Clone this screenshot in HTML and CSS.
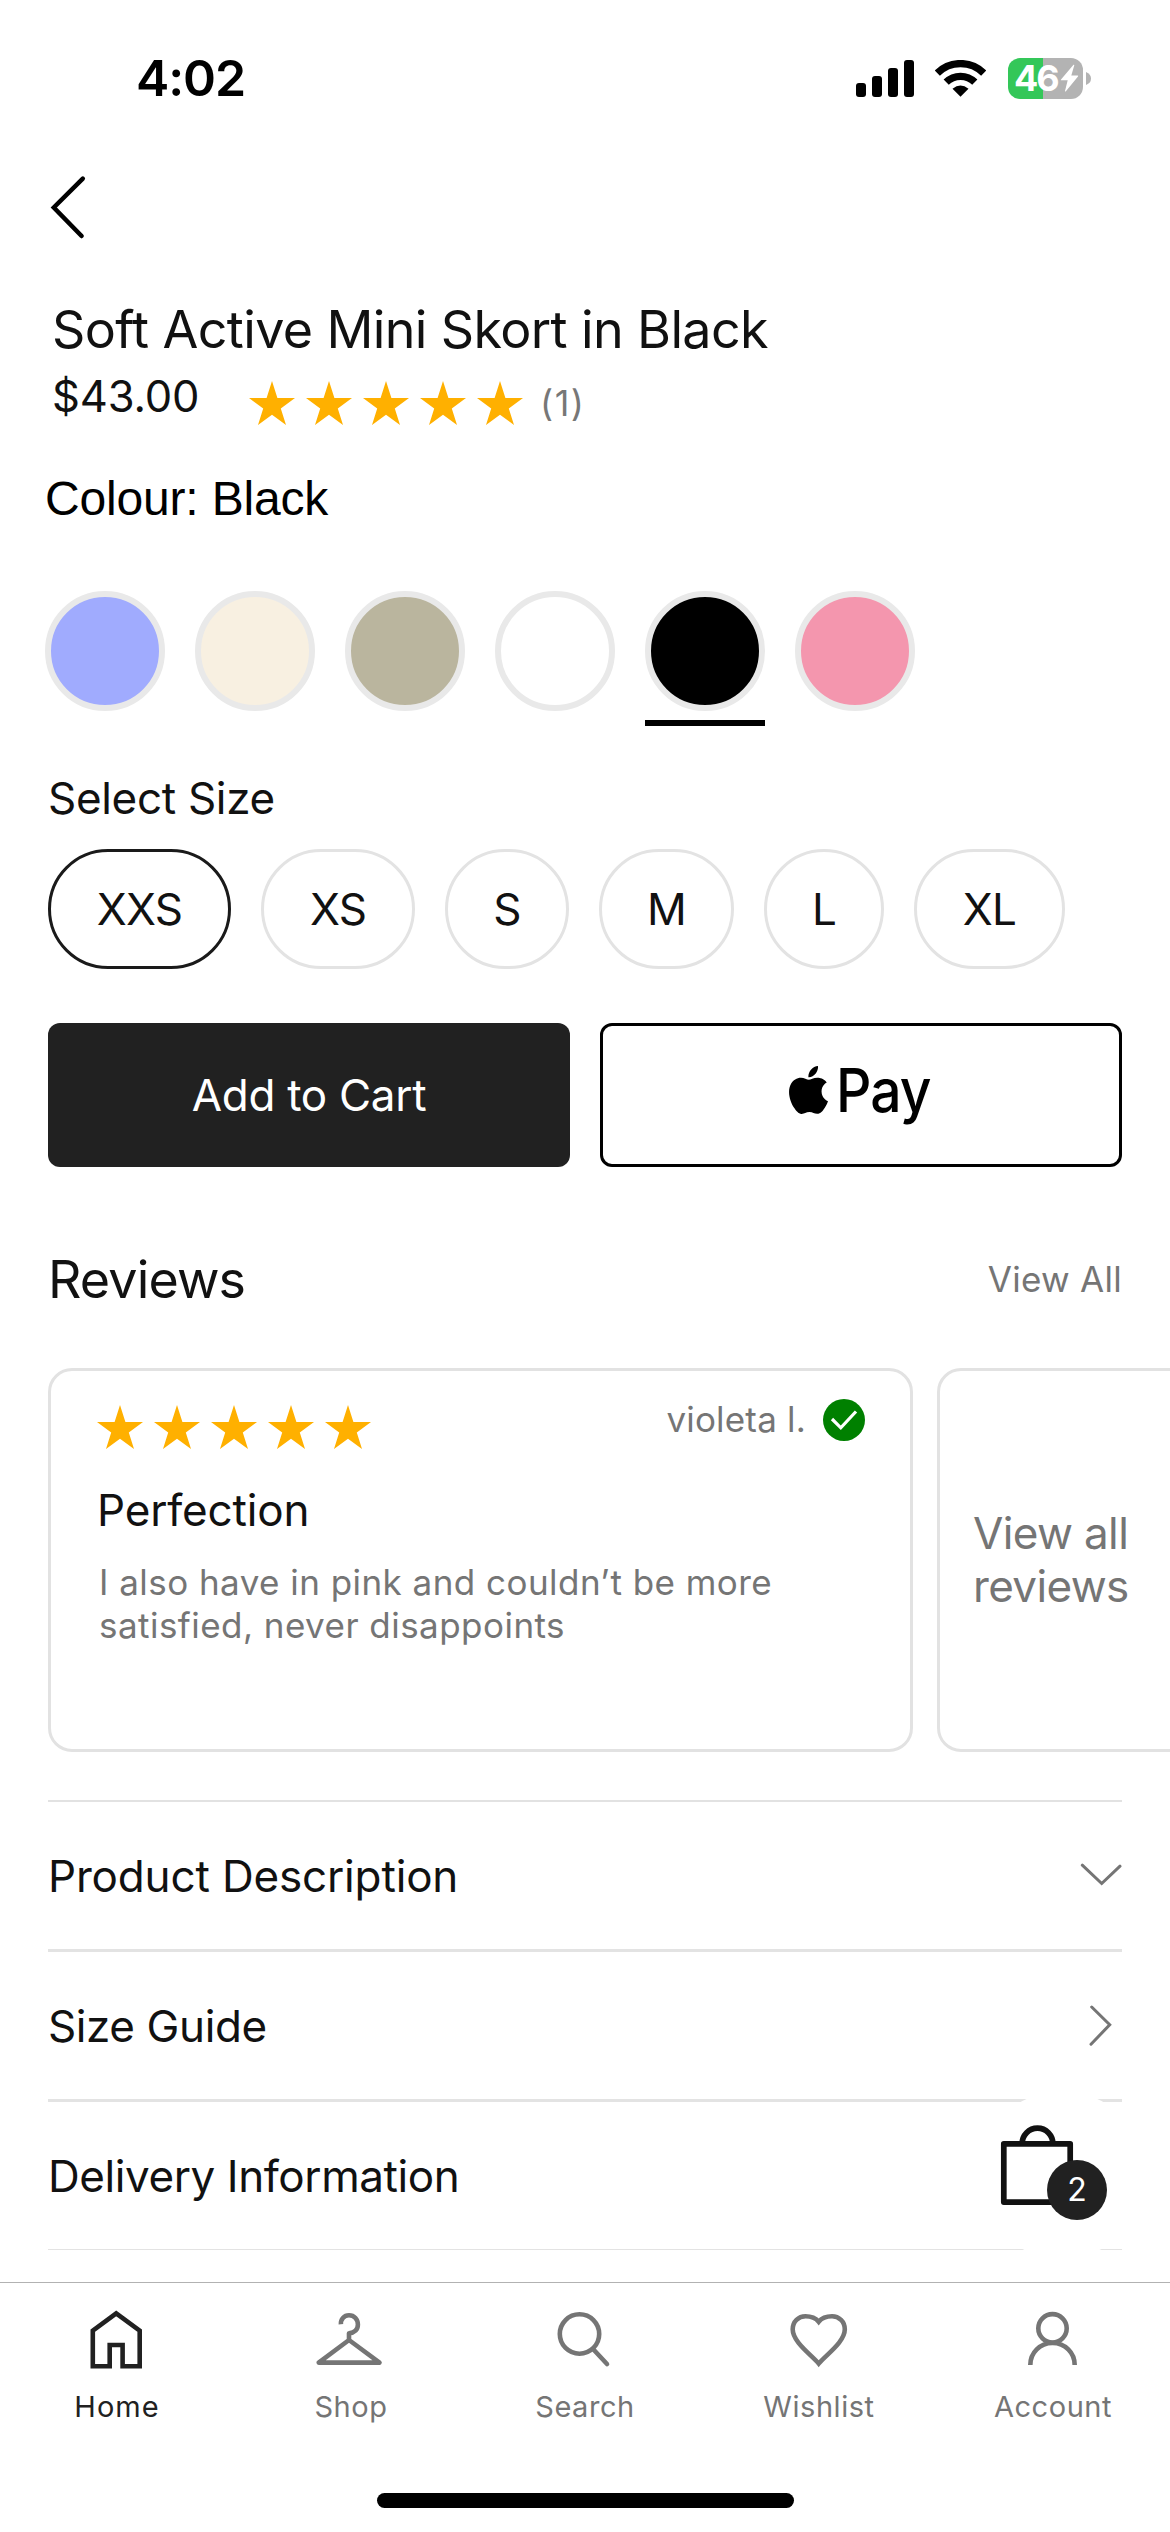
FILE: index.html
```html
<!DOCTYPE html>
<html lang="en">
<head>
<meta charset="utf-8">
<title>Soft Active Mini Skort in Black</title>
<link rel="stylesheet" href="styles.css">
</head>
<body>
<svg width="0" height="0" class="defs" aria-hidden="true">
  <symbol id="star" viewBox="0 0 46 44"><path d="M23 0l5.4 17H46L31.8 27.4 37 44 23 33.7 9 44l5.2-16.6L0 17h17.6z"/></symbol>
</svg>

<div class="screen">
  <header class="status">
    <span class="status__time">4:02</span>
    <div class="status__icons">
      <svg class="signal" width="58" height="37" viewBox="0 0 58 37">
        <rect x="0" y="23" width="10" height="14" rx="3"/>
        <rect x="16" y="16" width="10" height="21" rx="3"/>
        <rect x="32" y="8" width="10" height="29" rx="3"/>
        <rect x="48" y="0" width="10" height="37" rx="3"/>
      </svg>
      <svg class="wifi" width="51" height="37" viewBox="0 0 51 37">
        <path d="M2.3 13.1A33 33 0 0 1 48.7 13.1M11.2 22.2A20.3 20.3 0 0 1 39.8 22.2" fill="none" stroke="#000" stroke-width="7.3"/>
        <path d="M25.5 36.8l-8-8.1q8-6.4 16 0z"/>
      </svg>
      <div class="battery">
        <div class="battery__body">
          <span class="battery__level">46</span>
          <svg class="battery__bolt" width="19" height="28" viewBox="0 0 19 28"><path d="M13.5.8L1 15.4q-.6.9.5.9h6.2L5 27q0 .9.9.3L18 12.6q.6-1-.5-1h-6.200l3-10.300q0-1-.8-.5z"/></svg>
        </div>
        <svg class="battery__nub" width="5" height="13" viewBox="0 0 5 13"><path d="M0 0q5 2 5 6.500t-5 6.500z"/></svg>
      </div>
    </div>
  </header>

  <nav class="topnav">
    <svg width="42" height="70" viewBox="0 0 42 70"><path d="M34.800 6.600L5.800 35.500 33.600 64"/></svg>
  </nav>

  <main class="product">
    <h1 class="product__title">Soft Active Mini Skort in Black</h1>
    <div class="product__meta">
      <span class="product__price">$43.00</span>
      <div class="stars">
        <svg><use href="#star"/></svg><svg><use href="#star"/></svg><svg><use href="#star"/></svg><svg><use href="#star"/></svg><svg><use href="#star"/></svg>
      </div>
      <span class="product__count">(1)</span>
    </div>

    <p class="colour-label">Colour: Black</p>
    <div class="swatches">
      <div class="swatch"><span class="swatch__dot swatch__dot--blue"></span></div>
      <div class="swatch"><span class="swatch__dot swatch__dot--cream"></span></div>
      <div class="swatch"><span class="swatch__dot swatch__dot--khaki"></span></div>
      <div class="swatch"><span class="swatch__dot swatch__dot--white"></span></div>
      <div class="swatch swatch--selected"><span class="swatch__dot swatch__dot--black"></span></div>
      <div class="swatch"><span class="swatch__dot swatch__dot--pink"></span></div>
    </div>

    <p class="size-label">Select Size</p>
    <div class="sizes">
      <span class="size size--xxs size--selected">XXS</span>
      <span class="size size--xs">XS</span>
      <span class="size size--s">S</span>
      <span class="size size--m">M</span>
      <span class="size size--l">L</span>
      <span class="size size--xl">XL</span>
    </div>

    <div class="actions">
      <div class="btn btn--cart">Add to Cart</div>
      <div class="btn btn--pay">
        <svg width="39" height="48" viewBox="2.2 0 19.6 24"><path d="M12.152 6.896c-.948 0-2.415-1.078-3.96-1.04-2.04.027-3.91 1.183-4.961 3.014-2.117 3.675-.546 9.103 1.519 12.09 1.013 1.454 2.208 3.09 3.792 3.039 1.52-.065 2.09-.987 3.935-.987 1.831 0 2.35.987 3.96.948 1.637-.026 2.676-1.48 3.676-2.948 1.156-1.688 1.636-3.325 1.662-3.415-.039-.013-3.182-1.221-3.22-4.857-.026-3.04 2.48-4.494 2.597-4.559-1.429-2.09-3.623-2.324-4.39-2.376-2-.156-3.675 1.09-4.61 1.09zM15.53 3.83c.843-1.012 1.4-2.427 1.245-3.83-1.207.052-2.662.805-3.532 1.818-.78.896-1.454 2.338-1.273 3.714 1.338.104 2.715-.688 3.559-1.701"/></svg>
        <span class="btn__pay">Pay</span>
      </div>
    </div>

    <div class="reviews-head">
      <h2 class="reviews-head__title">Reviews</h2>
      <span class="reviews-head__all">View All</span>
    </div>

    <div class="cards">
      <article class="card">
        <div class="card__top">
          <div class="stars">
            <svg><use href="#star"/></svg><svg><use href="#star"/></svg><svg><use href="#star"/></svg><svg><use href="#star"/></svg><svg><use href="#star"/></svg>
          </div>
          <div class="card__author">
            <span class="card__name">violeta l.</span>
            <svg width="42" height="42" viewBox="0 0 42 42"><circle cx="21" cy="21" r="21" fill="#008000"/><path d="M9 20l8.800 8.800L33 12.500" fill="none" stroke="#fff" stroke-width="3.200"/></svg>
          </div>
        </div>
        <h3 class="card__title">Perfection</h3>
        <p class="card__text">I also have in pink and couldn’t be more satisfied, never disappoints</p>
      </article>
      <article class="card card--more">View all<br>reviews</article>
    </div>

    <div class="accordion">
      <div class="accordion__row"><span class="row-desc">Product Description</span>
        <svg width="42" height="42" viewBox="0 0 42 42"><path d="M2.300 10.200L21.700 28.500 40 11.200"/></svg></div>
      <div class="accordion__row"><span class="row-size">Size Guide</span>
        <svg width="42" height="42" viewBox="0 0 42 42"><path d="M11.700 2L29.700 19.800 11 39.200"/></svg></div>
      <div class="accordion__row"><span class="row-info">Delivery Information</span></div>
    </div>

    <div class="bag">
      <svg width="168" height="168" viewBox="0 0 168 168"><path d="M25.800 52.900H92.200V111.100H25.800zM44.100 53A15.400 15.800 0 0 1 74.900 53"/></svg>
      <span class="bag__count">2</span>
    </div>
  </main>

  <footer class="tabbar">
    <div class="tab tab--active">
      <svg width="72" height="72" viewBox="0 0 72 72"><path d="M35.200 10.300L58.700 27.700V63.300H41.600V42H28.700V63.300H11.800V27.700z"/></svg>
      <span class="tab__label tab__label--home">Home</span>
    </div>
    <div class="tab">
      <svg width="72" height="72" viewBox="0 0 72 72"><path d="M25.900 21.300C25.500 16.500 29 12.300 34 12.300C39.300 12.300 42.900 16.500 42.900 21.600C42.900 26.600 39.500 30 34 30.300V37M34 37L64.500 59.600H3.700z" stroke-linejoin="round"/></svg>
      <span class="tab__label">Shop</span>
    </div>
    <div class="tab">
      <svg width="72" height="72" viewBox="0 0 72 72"><circle cx="30.500" cy="31" r="19.700"/><path d="M44.500 46.500L58 61" stroke-linecap="round"/></svg>
      <span class="tab__label">Search</span>
    </div>
    <div class="tab">
      <svg width="72" height="72" viewBox="0 0 72 72"><path d="M35.700 60.600C28 51.500 9.700 39 9.700 26.300C9.700 18.500 15.500 13.300 22.500 13.300C28.500 13.300 33 15.500 35.700 18.800C38.400 15.500 43 13.300 49 13.300C56 13.300 61.800 18.500 61.800 26.300C61.800 39 43.400 51.500 35.700 60.600z"/></svg>
      <span class="tab__label">Wishlist</span>
    </div>
    <div class="tab">
      <svg width="72" height="72" viewBox="0 0 72 72"><circle cx="35.500" cy="25.300" r="14.200"/><path d="M13.300 62C13.300 49.500 23 40 35.500 40S57.700 49.500 57.700 62"/></svg>
      <span class="tab__label">Account</span>
    </div>
  </footer>
  <div class="home-indicator"></div>
</div>
</body>
</html>
```

FILE: styles.css
```css
* { box-sizing: border-box; }

body {
  margin: 0;
  background: #fff;
  color: #111;
  font-family: Inter, "Liberation Sans", sans-serif;
}

h1, h2, h3, p { margin: 0; font-weight: 400; }

svg { display: block; flex: none; }

.defs { position: absolute; }

.screen {
  width: 1170px;
  height: 2532px;
  overflow: hidden;
  display: flex;
  flex-direction: column;
}

/* status bar */
.status {
  height: 156px;
  padding: 0 79px 0 136px;
  display: flex;
  align-items: center;
  justify-content: space-between;
  color: #000;
}
.status__time {
  font-size: 50px;
  line-height: 60px;
  font-weight: 600;
  letter-spacing: -1.08px;
}
.status__icons { display: flex; align-items: center; }
.wifi { margin-left: 21.500px; }
.battery { display: flex; align-items: center; gap: 3px; margin-left: 22px; }
.battery__body {
  width: 75px;
  height: 41px;
  padding-left: 6px;
  border-radius: 12px;
  background: linear-gradient(90deg, #34c759 35px, #b3b3b3 35px);
  display: flex;
  align-items: center;
  color: #fff;
}
.battery__level {
  width: 46px;
  font-size: 36px;
  line-height: 41px;
  font-weight: 700;
  letter-spacing: -2px;
}
.battery__bolt { fill: #fff; }
.battery__nub { fill: #b3b3b3; }

/* back navigation */
.topnav {
  height: 102px;
  padding-left: 48px;
  display: flex;
  align-items: center;
}
.topnav path {
  fill: none;
  stroke: #000;
  stroke-width: 4.500;
  stroke-linecap: round;
}

/* product */
.product {
  position: relative;
  height: 2024px;
  padding: 39px 48px 0;
}
.product__title {
  padding-left: 4px;
  font-size: 52px;
  line-height: 66px;
  letter-spacing: -0.630px;
}
.product__meta {
  height: 80px;
  padding-left: 4px;
  display: flex;
  align-items: center;
}
.product__price {
  width: 197px;
  margin-bottom: 14px;
  font-size: 43.500px;
  line-height: 54px;
  letter-spacing: -0.150px;
}
.product__count {
  margin-left: 17px;
  font-size: 36px;
  line-height: 44px;
  letter-spacing: 1.500px;
  color: #777;
}
.stars { display: flex; gap: 11px; }
.stars svg { width: 46px; height: 44px; fill: #ffb000; }

.colour-label {
  margin: 28px 0 0 -3px;
  color: #000;
  font-family: "Liberation Sans", Arial, sans-serif;
  font-size: 48px;
  line-height: 56px;
  letter-spacing: -0.180px;
}

.swatches {
  margin: 64px 0 0 -3px;
  display: flex;
  gap: 30px;
  height: 135px;
}
.swatch { width: 120px; }
.swatch--selected { border-bottom: 6px solid #000; }
.swatch__dot {
  display: block;
  height: 120px;
  border: 6px solid #e9e9e9;
  border-radius: 50%;
}
.swatch__dot--blue { background: #a0abfe; }
.swatch__dot--cream { background: #f8f0e1; }
.swatch__dot--khaki { background: #bab59e; }
.swatch__dot--white { background: #fff; }
.swatch__dot--black { background: #000; }
.swatch__dot--pink { background: #f496ae; }

.size-label {
  margin-top: 45px;
  font-size: 44px;
  line-height: 54px;
  letter-spacing: -0.310px;
}
.sizes { margin-top: 24px; display: flex; gap: 30px; }
.size {
  height: 120px;
  border: 3px solid #e3e3e3;
  border-radius: 60px;
  display: flex;
  align-items: center;
  justify-content: center;
  font-size: 44px;
  letter-spacing: -0.800px;
}
.size--selected { border-color: #1a1a1a; }
.size--xxs { width: 183px; }
.size--xs { width: 154px; }
.size--s { width: 124px; }
.size--m { width: 135px; }
.size--l { width: 120px; }
.size--xl { width: 151px; }

.actions { margin-top: 54px; display: flex; gap: 30px; }
.btn {
  width: 522px;
  height: 144px;
  border-radius: 12px;
  display: flex;
  align-items: center;
}
.btn--cart {
  justify-content: center;
  background: #212121;
  color: #fff;
  font-size: 44px;
  letter-spacing: -0.290px;
}
.btn--pay {
  padding: 0 0 10px 186px;
  border: 3px solid #000;
  gap: 8px;
  color: #000;
}
.btn__pay {
  font-size: 60px;
  font-weight: 500;
  line-height: 72px;
  letter-spacing: -1px;
  transform: scaleX(0.920);
  transform-origin: left;
}

/* reviews */
.reviews-head {
  height: 70px;
  margin-top: 77px;
  display: flex;
  align-items: center;
  justify-content: space-between;
}
.reviews-head__title { font-size: 52px; letter-spacing: -0.860px; }
.reviews-head__all { font-size: 35px; letter-spacing: 0.280px; color: #757575; }

.cards { margin-top: 54px; display: flex; gap: 24px; width: 1122px; overflow: hidden; }
.card {
  flex: none;
  width: 865px;
  height: 384px;
  padding: 28px 45px 0 46px;
  border: 3px solid #e2e2e2;
  border-radius: 24px;
}
.card__top { display: flex; justify-content: space-between; }
.card__top .stars { margin-top: 6px; }
.card__author { display: flex; gap: 17px; }
.card__name {
  font-size: 35px;
  line-height: 41px;
  letter-spacing: 0.190px;
  color: #757575;
}
.card__title {
  margin-top: 34px;
  font-size: 44px;
  line-height: 54px;
  letter-spacing: -0.170px;
}
.card__text {
  margin: 24px 0 0 2px;
  font-size: 35px;
  line-height: 43px;
  letter-spacing: 0.460px;
  color: #757575;
}
.card--more {
  width: 400px;
  padding: 0 0 0 33px;
  display: flex;
  align-items: center;
  font-size: 44px;
  line-height: 53px;
  letter-spacing: -0.640px;
  color: #757575;
}

/* accordion */
.accordion { margin-top: 48px; border-top: 2px solid #e2e2e2; }
.accordion__row {
  height: 150px;
  border-bottom: 3px solid #e3e3e3;
  display: flex;
  align-items: center;
  justify-content: space-between;
  font-size: 44px;
}
.accordion__row:last-child { height: 148px; border-bottom-width: 1px; }
.accordion__row path {
  fill: none;
  stroke: #757575;
  stroke-width: 3;
  stroke-linecap: round;
}
.row-desc { letter-spacing: -0.160px; }
.row-size { letter-spacing: -0.390px; }
.row-info { letter-spacing: -0.420px; }

/* floating bag button */
.bag {
  position: absolute;
  left: 978px;
  top: 1833px;
  width: 168px;
  height: 168px;
  border-radius: 50%;
  background: #fff;
}
.bag path {
  fill: none;
  stroke: #111;
  stroke-width: 5.700;
  stroke-linejoin: round;
}
.bag__count {
  position: absolute;
  left: 69px;
  top: 69px;
  width: 60px;
  height: 60px;
  border-radius: 50%;
  background: #212121;
  color: #fff;
  font-size: 32px;
  line-height: 59px;
  text-align: center;
}

/* tab bar */
.tabbar {
  height: 211px;
  padding-top: 20px;
  border-top: 1px solid #b2b2b2;
  display: flex;
}
.tab {
  flex: 1;
  display: flex;
  flex-direction: column;
  align-items: center;
  gap: 14px;
  color: #757575;
}
.tab--active { color: #212121; }
.tab svg { fill: none; stroke: currentColor; stroke-width: 4.600; }
.tab__label { font-size: 29px; line-height: 36px; letter-spacing: 0.550px; }
.tab__label--home { letter-spacing: 1px; }

.home-indicator {
  width: 417px;
  height: 15px;
  margin-left: 377px;
  border-radius: 8px;
  background: #000;
}
```
